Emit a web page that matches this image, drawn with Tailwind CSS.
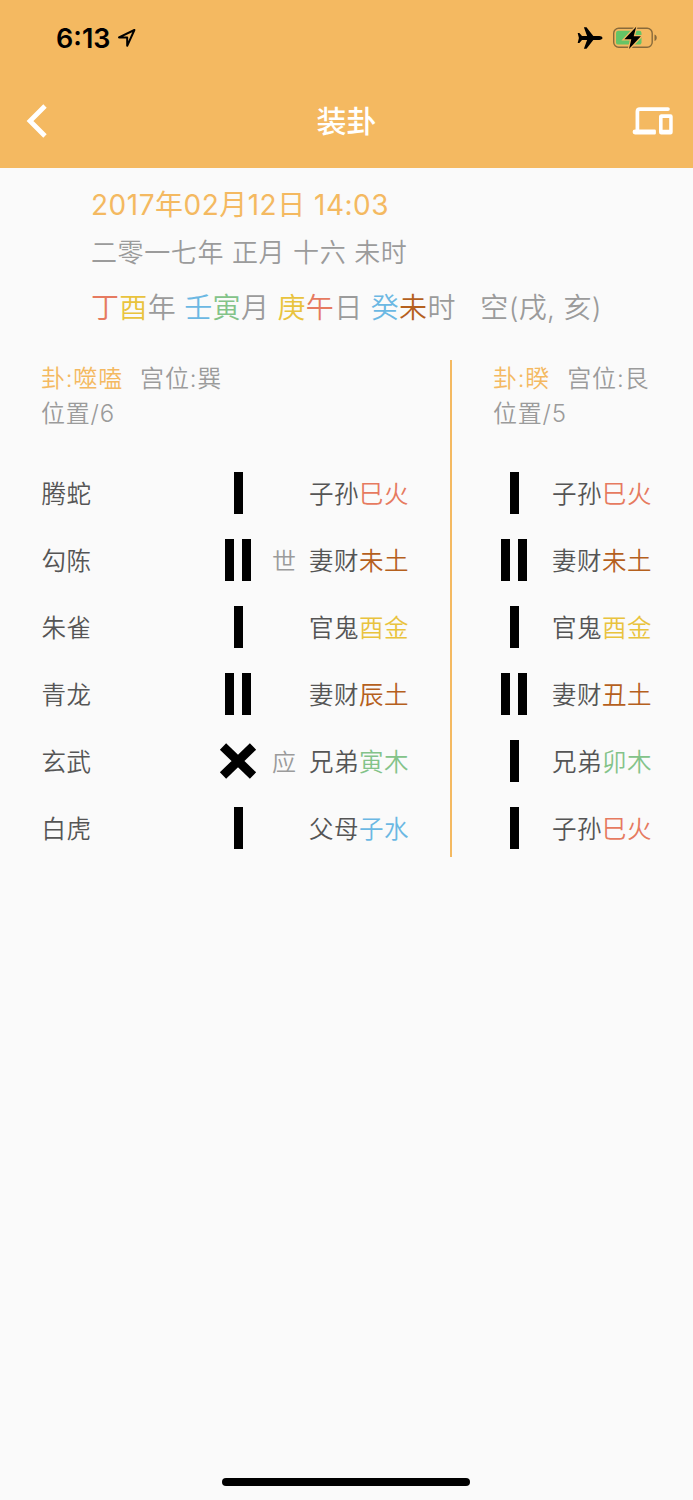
<!DOCTYPE html>
<html lang="zh-CN">

<head>
    <meta charset="UTF-8">
    <meta name="viewport" content="width=device-width, initial-scale=1.0">
    <title>装卦</title>
    <script src="https://cdn.jsdelivr.net/npm/@tailwindcss/browser@4"></script>
</head>

<body class="bg-[#fafafa] font-['Inter','Noto_Sans_CJK_SC',sans-serif] font-[350] text-[#9b9b9b]">
    <div class="flex h-[1500px] w-[693px] flex-col overflow-hidden">
        <header class="h-[167.5px] shrink-0 bg-[#f4b961]">
            <!-- Status bar -->
            <div class="flex h-[76px] items-center justify-between pr-[35px] pl-[56px] text-black">
                <div class="flex items-center gap-[7px]">
                    <span class="pt-[2px] text-[27px] font-semibold">6:13</span>
                    <svg class="h-5 w-5" viewBox="0 0 20 20" fill="none" stroke="black" stroke-width="2" stroke-linejoin="round">
                        <path d="M17.4 2 L2 9.4 H10.2 V17.8 Z" />
                    </svg>
                </div>
                <div class="flex items-center gap-[9px]">
                    <svg class="h-6 w-[26px]" viewBox="0 0 26 24">
                        <path d="M25.5 12c0-1-1.5-1.9-3.2-1.9h-6L9.5 1.2H6.9l3.2 8.9H5L2.4 7H.7l1.2 5-1.2 5h1.7L5 13.9h5.1l-3.2 8.9h2.6l6.8-8.9h6c1.7 0 3.2-.9 3.2-1.9z" />
                    </svg>
                    <svg class="h-6 w-[46px]" viewBox="0 0 46 24">
                        <rect x="1.7" y="2.2" width="38.5" height="19" rx="5" fill="none" stroke="#886a3b" stroke-width="1.4" />
                        <path d="M42.5 8.5c3 1 3 5.5 0 6.5z" fill="#886a3b" />
                        <rect x="4" y="4.8" width="25.5" height="13.8" rx="2.2" fill="#65c466" />
                        <path d="M24.2 .8 L12.4 13.3 H19.3 L17 23 L28.9 10.2 H21.7 Z" fill="black" stroke="#f4b961" stroke-width="2.6" paint-order="stroke" />
                    </svg>
                </div>
            </div>
            <!-- Navigation bar -->
            <div class="flex h-[90px] items-center justify-between pr-[20px] pl-[25px] text-white">
                <svg class="h-[34px] w-[41px]" viewBox="0 0 41 34" fill="none" stroke="white" stroke-width="4.8">
                    <path d="M20 2 L5 17 L20 32" />
                </svg>
                <h1 class="mr-[5px] text-[30px] leading-none font-medium">装卦</h1>
                <svg class="h-[28px] w-[41px]" viewBox="0 0 41 28" fill="none" stroke="white">
                    <path d="M5.4 24V4.5Q5.4 2.1 7.9 2.1H36" stroke-width="3.7" stroke-linecap="round" />
                    <path d="M3 22.6H22.7A1.2 1.2 0 0 1 23.9 23.8V26.2A1.2 1.2 0 0 1 22.7 27.4H3A2.4 2.4 0 0 1 3 22.6Z" fill="white" stroke="none" />
                    <path d="M29 7.3H38.5A2.2 2.2 0 0 1 40.7 9.5V25.2A2.2 2.2 0 0 1 38.5 27.4H29.2A2.2 2.2 0 0 1 27 25.2V9.5A2.2 2.2 0 0 1 29 7.3ZM30.6 11V22.8H37.2V11Z" fill="white" fill-rule="evenodd" stroke="none" />
                </svg>
            </div>
        </header>

        <section class="flex h-[192.5px] shrink-0 flex-col pt-[17.5px] pl-[91px] whitespace-nowrap">
            <p class="h-10 text-[28px] leading-10 font-normal tracking-[0.5px] text-[#f4b961]">2017年02月12日 14:03</p>
            <p class="mt-2 h-10 text-[26px] leading-10 tracking-[0.6px]">二零一七年 正月 十六 未时</p>
            <p id="pillars" class="mt-[15px] h-10 text-[28px] leading-10 tracking-[0.33px] whitespace-pre"></p>
        </section>

        <main class="flex h-[497px] shrink-0">
            <section class="w-[452px] border-r-2 border-[#f4b961] pr-[40px] pl-[41px] text-[24px]">
                <div class="h-[99px] pt-[1px] leading-[35px] tracking-[0.8px]">
                    <p class="whitespace-pre [word-spacing:1px]"><span class="text-[#f4b961]">卦:噬嗑</span>  宫位:巽</p>
                    <p>位置/6</p>
                </div>
                <div id="main-lines"></div>
            </section>
            <section class="w-[241px] pl-[41px] text-[24px]">
                <div class="h-[99px] pt-[1px] leading-[35px] tracking-[0.8px]">
                    <p class="whitespace-pre [word-spacing:1px]"><span class="text-[#f4b961]">卦:睽</span>  宫位:艮</p>
                    <p>位置/5</p>
                </div>
                <div id="changed-lines"></div>
            </section>
        </main>

        <div class="mt-auto mb-[14px] ml-[222px] h-2 w-[248px] rounded-full bg-black"></div>
    </div>

    <script>
        const colors = {
            fire: "text-[#e67a60]",
            earth: "text-[#b5601d]",
            metal: "text-[#e9c33d]",
            wood: "text-[#83c389]",
            water: "text-[#6bb8e3]",
            gray: "text-[#9b9b9b]"
        };

        const pillars = [
            ["丁", "fire"], ["酉", "metal"], ["年 ", "gray"],
            ["壬", "water"], ["寅", "wood"], ["月 ", "gray"],
            ["庚", "metal"], ["午", "fire"], ["日 ", "gray"],
            ["癸", "water"], ["未", "earth"], ["时   空(戌, 亥)", "gray"]
        ];

        const mainLines = [
            ["腾蛇", "yang", "", "子孙", "巳火", "fire"],
            ["勾陈", "yin", "世", "妻财", "未土", "earth"],
            ["朱雀", "yang", "", "官鬼", "酉金", "metal"],
            ["青龙", "yin", "", "妻财", "辰土", "earth"],
            ["玄武", "moving", "应", "兄弟", "寅木", "wood"],
            ["白虎", "yang", "", "父母", "子水", "water"]
        ];

        const changedLines = [
            ["yang", "子孙", "巳火", "fire"],
            ["yin", "妻财", "未土", "earth"],
            ["yang", "官鬼", "酉金", "metal"],
            ["yin", "妻财", "丑土", "earth"],
            ["yang", "兄弟", "卯木", "wood"],
            ["yang", "子孙", "巳火", "fire"]
        ];

        const bar = `<i class="h-[42px] w-[9px] bg-black"></i>`;
        const symbols = {
            yang: bar,
            yin: bar + bar,
            moving: `<svg class="h-[38px] w-[38px] shrink-0" viewBox="0 0 38 38" stroke="black" stroke-width="9"><path d="M4 4.5L34 33.5M34 4.5L4 33.5" /></svg>`
        };

        function symbol(type) {
            return `<span class="flex w-[42px] shrink-0 justify-center gap-2">${symbols[type]}</span>`;
        }

        function relation(name, branch, element) {
            return `<span class="w-[100px] shrink-0 pt-[4px] text-[24.5px] tracking-[0.5px] whitespace-nowrap text-[#555]">${name}<span class="${colors[element]}">${branch}</span></span>`;
        }

        document.getElementById("pillars").innerHTML = pillars
            .map(([text, element]) => `<span class="${colors[element]}">${text}</span>`).join("");

        document.getElementById("main-lines").innerHTML = mainLines
            .map(([animal, type, mark, name, branch, element]) => `
                <div class="flex h-[67px] items-center">
                    <span class="w-[176px] shrink-0 pt-[4px] pl-[0.5px] text-[24.5px] tracking-[0.5px] text-[#555]">${animal}</span>
                    ${symbol(type)}
                    <span class="ml-[13px] w-[37px] shrink-0 pt-[4px]">${mark}</span>
                    ${relation(name, branch, element)}
                </div>`).join("");

        document.getElementById("changed-lines").innerHTML = changedLines
            .map(([type, name, branch, element]) => `
                <div class="flex h-[67px] items-center gap-[17px]">
                    ${symbol(type)}
                    ${relation(name, branch, element)}
                </div>`).join("");
    </script>
</body>

</html>
